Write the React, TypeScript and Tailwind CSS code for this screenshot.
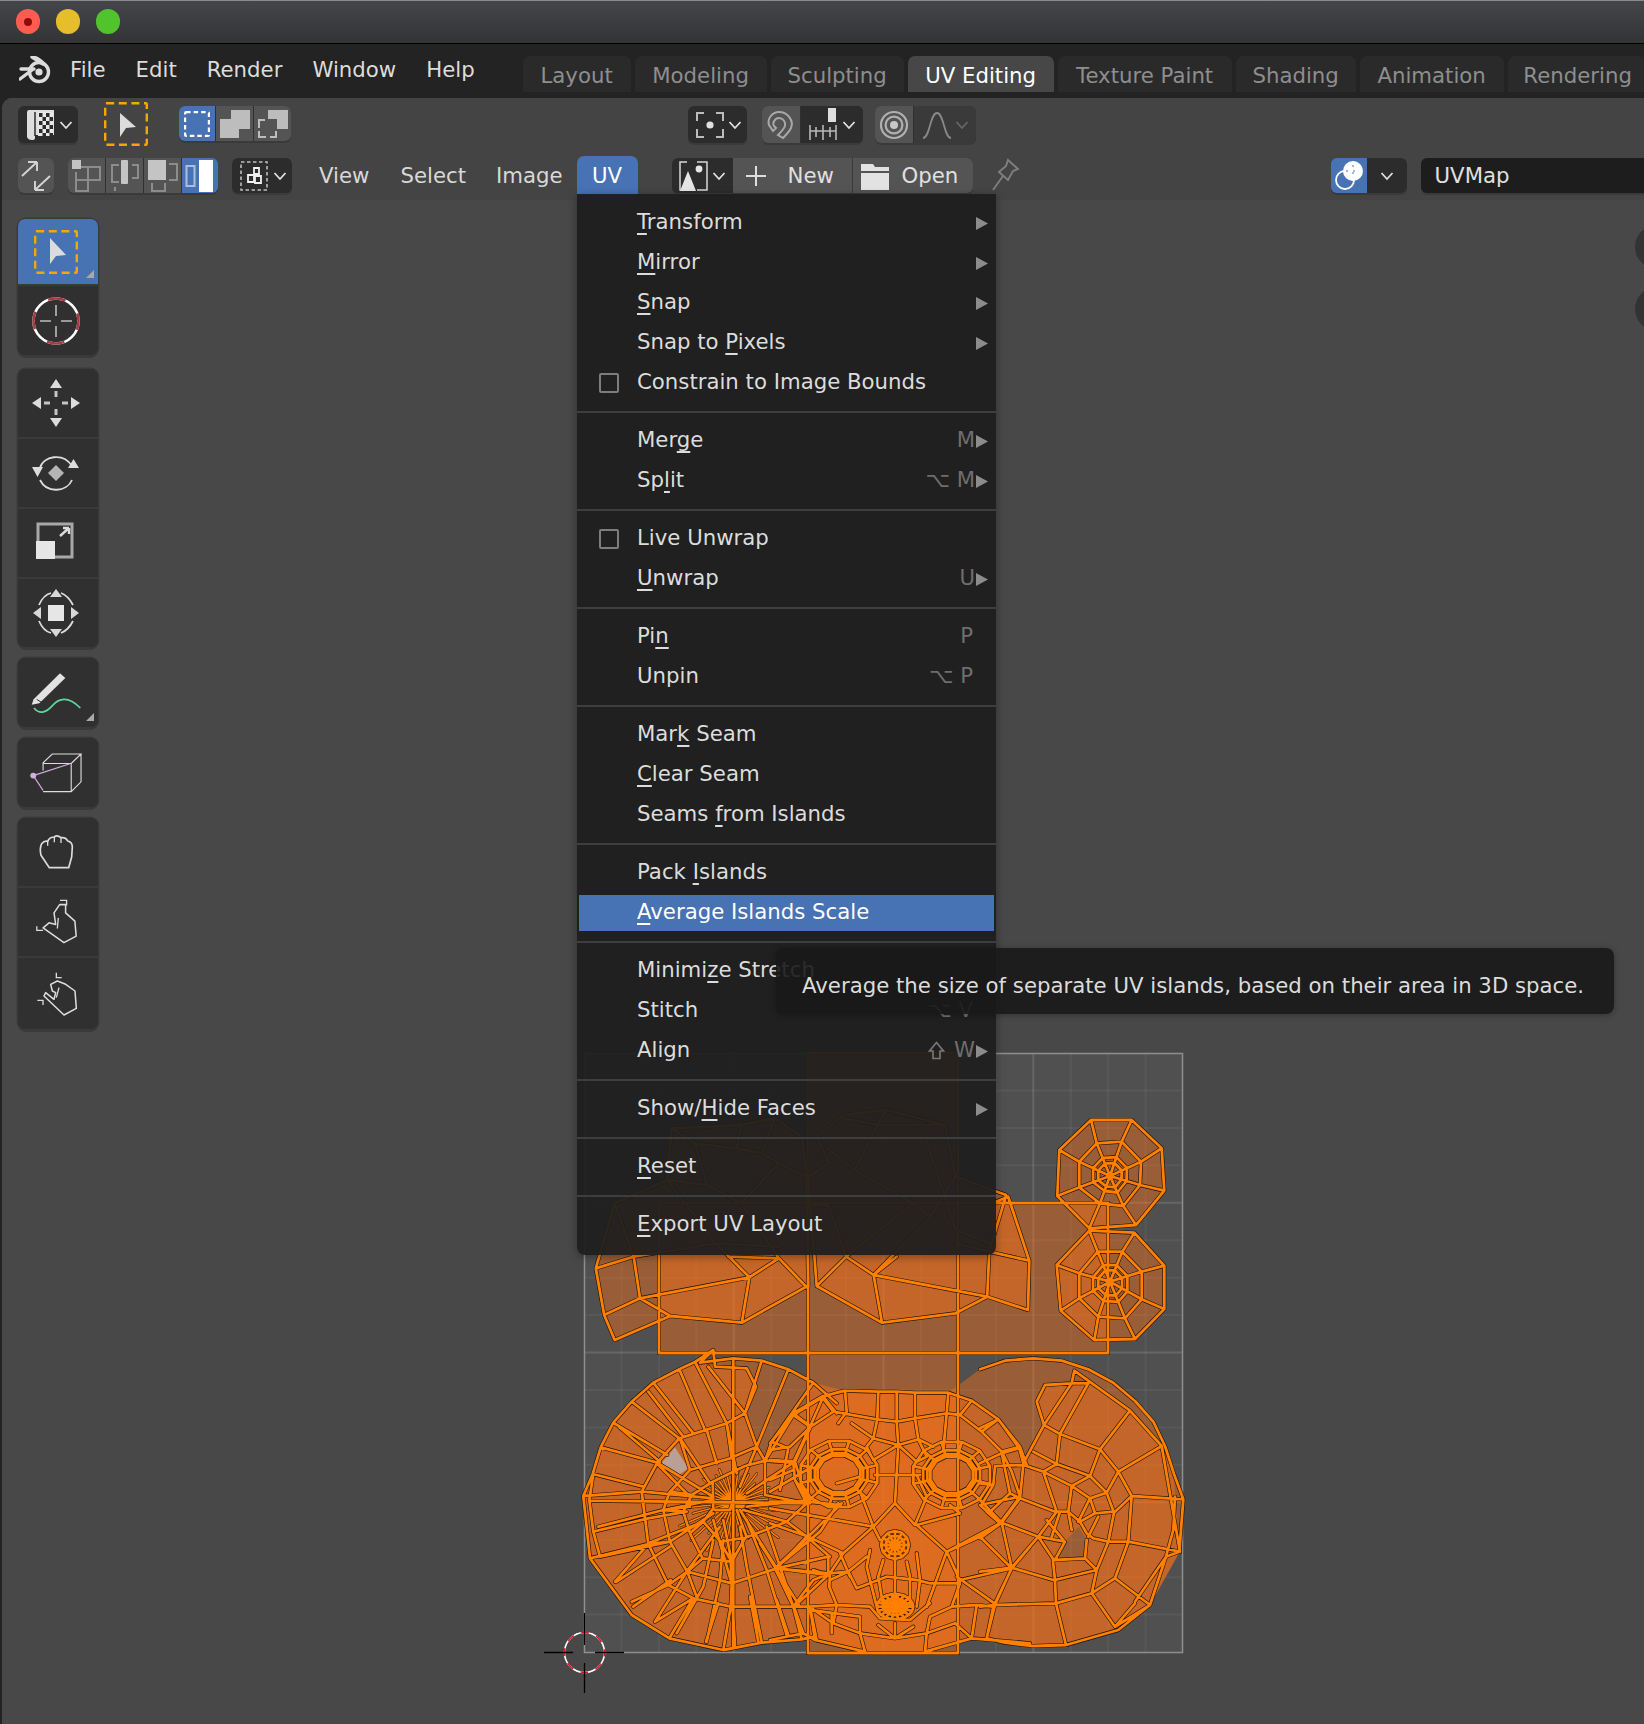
import React from "react";

const F = { fontFamily: '"DejaVu Sans", "Liberation Sans", sans-serif' };

type M = [number, number, number, number];
const z9: M = [580, 1340, 1 / 3, 1 / 3];
const z10: M = [770, 1380, 1 / 3, 1 / 3];
const z11: M = [980, 1340, 1 / 3, 1 / 3];
const z12: M = [1040, 1100, 1 / 3, 1 / 3];
const z7: M = [560, 1030, 1 / 2.376, 1 / 3];

const parse = (s: string, m: M) =>
  s.trim().split(/\s+/).map((p) => {
    const [x, y] = p.split(",").map(Number);
    return [m[0] + x * m[2], m[1] + y * m[3]] as [number, number];
  });
const toD = (pts: [number, number][]) => "M" + pts.map((p) => p[0].toFixed(1) + " " + p[1].toFixed(1)).join("L");
const lines = (arr: string[], m: M) => arr.map((s) => toD(parse(s, m))).join("");

const leftLines = [
  "10,468 38,402 62,322 100,248 155,185 220,128 298,88 345,66 400,30 405,80 500,85 528,140 495,220 530,320 555,362 575,305 640,225 730,170 780,155",
  "345,66 400,30 360,68 460,55 545,62 625,88 700,128 770,190",
  "10,468 30,655 155,825 268,895 430,930 545,908 665,898 700,890",
  "28,480 40,575 60,650", "40,402 28,480", "10,468 185,455", "30,655 205,612",
  "185,455 232,368 298,295 440,250 495,220", "30,655 205,612 265,735 340,775 452,800 640,800 690,800", "185,455 205,612",
  "62,322 232,368", "38,402 190,440", "100,248 262,345", "118,262 240,365", "155,185 298,295", "205,155 310,290", "220,128 340,280", "298,88 375,270", "345,66 440,250", "385,80 495,220",
  "105,725 205,612", "155,785 265,735", "160,800 272,720", "225,845 340,775", "268,895 340,775", "290,880 345,780", "378,905 415,790", "430,930 452,800", "465,915 458,805", "545,905 515,770", "625,885 590,780", "665,898 640,800",
  "40,575 205,535 320,515", "60,650 270,605",
  "250,510 268,458 330,390 450,355 530,320", "250,510 270,605 322,695 455,730 590,685 745,705", "272,605 205,612", "322,695 265,735", "455,730 452,800", "590,685 640,800",
  "310,515 335,465 398,425 495,378 555,362 640,368", "310,515 330,580 368,655 452,665 455,730", "368,655 322,695", "335,465 270,455", "310,515 250,510",
  "370,545 422,605 500,592 620,545 680,490 645,420", "400,505 398,425", "405,510 450,510 460,480", "555,362 555,465 680,490", "420,605 455,665 495,595", "330,580 370,545 400,505",
  "545,62 495,220", "625,88 530,320", "700,128 575,305", "440,250 455,355", "380,270 410,370", "300,295 330,390", "190,455 400,475", "232,368 400,470", "250,510 400,480", "205,610 370,545", "270,605 400,520", "320,695 420,560", "455,665 430,540", "590,685 480,510",
  "322,695 350,770", "455,730 400,540", "640,800 560,560", "680,590 590,685", "680,590 620,545", "750,650 680,590", "590,685 745,650", "640,368 645,420 690,480", "575,305 625,325 600,450", "640,225 690,260 640,368", "690,260 730,170", "730,170 770,220", "690,800 710,900", "640,800 700,720 750,700",
  "510,770 535,905", "460,60 460,920", "28,482 690,490",
  "290,880 370,740 400,600", "380,905 420,720 430,600", "545,905 500,680 480,560", "620,885 560,690 500,540", "660,800 540,610", "225,845 320,695", "110,725 270,620", "55,560 250,510 330,500", "230,370 330,470", "300,295 390,430", "440,250 470,400", "530,320 480,440", "640,368 500,460", "690,480 500,500", "620,545 490,510", "500,592 470,510", "640,225 555,362", "700,690 745,705 745,650",
];
const fan: string[] = [];
for (let i = 0; i < 38; i++) {
  const a = (i / 38) * Math.PI * 2 + 0.05;
  const down = Math.sin(a) > 0.1;
  const r = down ? (i % 2 ? 120 : 170) : 85 + (i % 3) * 14;
  const c = Math.cos(a), s = Math.sin(a);
  fan.push(`${(460 + c * 8).toFixed(0)},${(488 + s * 6).toFixed(0)} ${(460 + c * r * 1.05).toFixed(0)},${(488 + s * r * 0.95).toFixed(0)}`);
}

const centerLines = [
  "0,190 70,100 155,50 225,32 325,35 380,35 435,38 535,38 605,62 685,118 750,200 770,255",
  "122,140 190,95 320,118 380,125 435,115 530,100 570,105 635,155 695,215 725,275 750,350",
  "225,32 230,95 205,130", "325,35 322,118 310,175", "380,35 380,125 385,195 375,370", "435,38 435,115 445,178", "535,38 530,100 520,210", "605,62 570,105", "685,118 635,155", "750,200 695,215", "155,50 190,95", "70,100 122,140", "122,140 75,245 110,360",
  "310,175 385,195 445,178", "310,175 245,130", "445,178 490,200", "290,200 310,240 385,195 440,245 470,230", "310,175 290,200", "445,178 470,230",
  "315,285 370,285 450,285", "375,370 310,440 330,480", "375,370 435,435", "272,340 310,440", "470,350 435,435", "270,290 200,310",
  "0,365 115,365 205,375", "205,370 150,455 15,565", "15,565 180,580 235,575", "115,470 220,520 310,440", "440,435 530,515 630,470", "530,515 470,680", "440,435 570,400 540,375", "650,395 690,430 530,515", "690,430 750,350", "690,430 630,470 725,565 780,500", "570,600 725,565", "725,565 670,680", "560,590 680,675", "0,385 310,440", "0,430 115,470", "115,470 215,370", "115,470 15,565", "15,565 70,680",
  "220,520 180,580 178,620 200,675 118,680 72,680", "180,600 235,575 290,530", "235,575 260,625 350,590 440,600 480,610 560,610", "200,675 300,680", "300,680 330,715 420,720 480,670", "270,710 120,690", "120,680 135,780 285,815", "270,710 270,760 285,815", "325,735 375,775 430,740", "375,775 375,730", "270,760 375,775 470,760 465,815", "480,710 470,760", "480,710 545,680 620,675 670,680", "555,730 605,775 620,675", "555,730 470,760", "465,815 605,775", "118,680 190,730 270,760", "190,730 200,675", "185,700 185,760",
  "300,510 290,560 320,680", "340,540 325,590 340,680", "375,540 375,680", "410,545 420,590 420,680", "440,520 450,600 440,680", "0,780 100,760 135,780", "530,515 560,580 570,610 545,680", "0,680 72,680 100,760", "72,680 180,580", "605,775 780,790", "670,680 650,775", "630,470 530,515", "210,520 240,590", "0,240 75,245", "0,300 70,270", "0,335 110,270", "750,350 630,375 690,430", "440,285 470,350", "0,210 60,200 122,140",
];

const rightLines = [
  "0,88 75,62 160,55 245,62 325,88 400,128 465,183 520,245 555,318 582,402 610,478 598,635 558,650 510,795 415,870 258,915 160,918 75,908 20,895",
  "283,92 275,130 195,135 170,185 192,255", "283,92 450,212 545,318 600,635", "275,130 325,130", "275,130 192,255 130,370", "325,130 240,282 230,370", "192,255 240,282 360,328 330,408", "450,212 360,328 415,395 545,318", "415,395 455,468 610,478", "455,468 445,605 600,635", "455,468 402,518 385,605 445,605", "415,395 380,458 402,518", "330,408 380,458 330,475 275,438 330,408", "160,335 230,372 330,408", "130,375 190,395 275,438", "230,372 190,395 230,515 265,515", "275,438 265,515 275,570", "330,475 345,520 400,515", "345,520 300,545 320,580 340,595 385,605", "330,475 295,545", "265,515 300,545", "385,605 350,690 335,760", "445,605 405,715 510,795", "405,715 335,760 405,860", "350,690 315,655 225,660 218,655 225,720 350,690", "225,720 228,790 335,760", "225,660 255,605 175,590", "230,515 175,590 95,683 0,695", "175,590 218,655", "95,683 220,720", "95,683 45,795", "45,795 228,790 258,915", "45,795 20,895", "0,800 45,795", "130,375 120,475 225,515", "120,475 65,548 175,590", "65,548 95,683", "65,548 0,595", "118,325 130,370", "118,325 55,238 0,200", "55,238 0,265", "118,325 65,340 90,460 120,475", "65,340 0,370", "50,378 130,375", "90,460 30,515", "40,435 0,430", "45,378 40,435 10,485", "0,480 65,548", "30,515 65,548", "405,860 510,795", "405,860 465,790", "585,470 580,570 558,650 465,785", "200,540 250,600", "240,515 215,590", "315,655 320,600", "355,530 325,590",
];

const topLines = [
  "85,715 105,855 130,930 262,858 432,878 585,770 520,685 450,742 190,805 105,855", "85,715 175,680 190,805 262,858", "450,742 432,878", "520,685 585,770", "520,685 400,680", "450,742 370,640 255,450 130,520 85,715", "175,680 130,520", "255,450 265,295 430,285 510,265 575,320 585,440 590,770", "430,290 420,355 320,340 265,295", "510,265 480,370 420,355", "320,340 350,465 255,450", "480,370 520,400 430,520 350,465", "585,440 520,400", "430,520 520,685", "175,680 370,640 520,650",
  "610,768 680,680 745,735 765,878 610,768", "765,878 940,850 1015,800 745,735", "1015,800 1112,840 1115,692 1020,665 1015,800", "745,735 800,680", "1115,692 1065,500 1035,515", "1020,665 940,640", "675,255 775,240 915,285 940,440 1060,495", "610,320 675,255", "610,320 640,400 590,440 610,768", "775,240 755,285 675,265", "915,285 755,285", "755,285 700,420 840,520 680,680", "870,330 940,600 1020,640", "635,355 700,420", "840,520 880,560 940,440", "1060,495 1020,665", "680,680 640,530 590,520", "880,560 745,735",
];

const ringPts = (cx: number, cy: number, rx: number, ry: number, n: number, p = 0) =>
  Array.from({ length: n }, (_, i) => {
    const a = ((i + p) / n) * Math.PI * 2;
    return [cx + Math.cos(a) * rx, cy + Math.sin(a) * ry] as [number, number];
  });
const closed = (p: [number, number][]) => toD([...p, p[0]]);
const mapPts = (p: [number, number][], m: M) => p.map((q) => [m[0] + q[0] * m[2], m[1] + q[1] * m[3]] as [number, number]);

function eye(cx: number, cy: number) {
  const n = 12;
  const scales = [1, 1.14, 1.34, 1.8];
  let d = "";
  const rs = scales.map((s) => mapPts(ringPts(cx, cy, 66 * s, 57 * s, n, 0.5), z10));
  rs.forEach((r) => (d += closed(r)));
  for (let i = 0; i < n; i += 1) d += toD(rs.map((r) => r[i]));
  return d;
}
function cluster(cx: number, cy: number, rx: number, ry: number, rings: number, n: number) {
  let d = "";
  for (let k = 1; k <= rings; k++) d += closed(mapPts(ringPts(cx, cy, (rx * k) / rings, (ry * k) / rings, n), z10));
  const o = mapPts(ringPts(cx, cy, rx, ry, n), z10);
  const c = mapPts([[cx, cy]], z10)[0];
  o.forEach((q) => (d += toD([c, q])));
  return d;
}
function web(outerS: string, ringS: string, cx: number, cy: number) {
  const o = parse(outerS, z12);
  const r = parse(ringS, z12);
  const c = parse(`${cx},${cy}`, z12)[0];
  const lerp = (a: [number, number], t: number) => [c[0] + (a[0] - c[0]) * t, c[1] + (a[1] - c[1]) * t] as [number, number];
  let d = closed(o) + closed(r);
  const r3 = r.map((p) => lerp(p, 0.55));
  const r4 = r.map((p) => lerp(p, 0.38));
  d += closed(r3) + closed(r4);
  o.forEach((p, i) => (d += toD([p, r[i], c])));
  return { d, fill: closed(o) };
}
const w1 = web("153,60 275,60 365,145 373,272 288,375 148,385 52,288 58,150", "170,130 245,125 303,185 300,255 250,318 180,310 118,262 118,185", 210, 228);
const w2 = web("148,392 283,398 373,497 373,627 285,717 163,720 62,632 50,495", "173,455 247,455 305,515 305,598 255,655 175,650 118,595 118,520", 210, 545);

const fillB =
  "583.3,1496 592.7,1474 600.7,1447.3 613.3,1422.7 631.7,1401.7 653.3,1382.7 679.3,1369.3 695,1362 715,1366.7 746.7,1368.3 756,1386.7 745,1413.3 756.7,1446.7 765,1460 771.7,1441.7 793.3,1415 823.3,1396.7 845,1390.7 948.3,1392.7 971.7,1400.7 998.3,1419.3 1020,1446.7 1023.3,1463 1045,1425 1036.7,1401.7 1045,1385 1071.7,1383.3 1088.3,1383.3 1130,1410.7 1161.7,1446 1174,1474 1175,1496.7 1180,1551.7 1150,1605 1118.3,1630 1066,1645 1033.3,1646 986.7,1638.3 971.7,1638 925,1652.7 865,1652.7 803,1639 761.7,1642.7 723.3,1650 669.3,1638.3 631.7,1615 590,1558.3";
const hole = "1052.7,1558.3 1065,1541.7 1078.3,1526.7 1086.7,1540 1085,1558.3";
const fillA =
  "583.3,1496 592.7,1474 600.7,1447.3 613.3,1422.7 631.7,1401.7 653.3,1382.7 679.3,1369.3 695,1362 733.3,1358.3 761.7,1360.7 788.3,1369.3 813.3,1382.7 845,1390.7 948.3,1392.7 980,1369.3 1005,1360.7 1033.3,1358.3 1061.7,1360.7 1088.3,1369.3 1113.3,1382.7 1135,1401 1153.3,1421.7 1165,1446 1174,1474 1183.3,1499.3 1179.3,1551.7 1150,1605 1118.3,1630 1066,1645 1033.3,1646 986.7,1638.3 971.7,1638 925,1652.7 865,1652.7 803,1639 761.7,1642.7 723.3,1650 669.3,1638.3 631.7,1615 590,1558.3";
const polyD = (s: string) => "M" + s.trim().split(/\s+/).map((p) => p.replace(",", " ")).join("L") + "Z";
const topFillL = "85,715 105,855 130,930 262,858 432,878 585,770 590,440 575,320 510,265 430,285 265,295 255,450 130,520";
const topFillR = "610,768 765,878 940,850 1015,800 1112,840 1115,692 1065,500 940,440 915,285 775,240 675,255 610,320 640,400 590,440";

const FACE = "rgba(255,115,22,.42)";

function Mesh() {
  const allLines =
    lines(topLines, z7) +
    lines(leftLines, z9) +
    lines(centerLines, z10) +
    lines(rightLines, z11) +
    eye(207, 282) +
    eye(545, 285) +
    cluster(375, 495, 42, 42, 3, 12) +
    cluster(375, 680, 55, 38, 3, 18) +
    w1.d +
    w2.d +
    "M659 1203H1108V1353H659ZM808 1053H958V1653H808Z";
  const fanD = lines(fan, z9);
  const grid: React.ReactNode[] = [];
  for (let i = 1; i < 16; i++) {
    const p = i * 37.44;
    const o = i % 4 === 0 ? 0.13 : 0.05;
    grid.push(<line key={"v" + i} x1={584 + p} y1={1053} x2={584 + p} y2={1652} stroke="#fff" strokeOpacity={o} strokeWidth={2} />);
    grid.push(<line key={"h" + i} x1={584} y1={1053 + p} x2={1183} y2={1053 + p} stroke="#fff" strokeOpacity={o} strokeWidth={2} />);
  }
  return (
    <svg className="absolute left-0 top-0" width={1644} height={1724} viewBox="0 0 1644 1724" fill="none">
      <rect x={584} y={1053} width={599} height={599} fill="#505050" />
      {grid}
      <rect x={584.5} y={1053.5} width={598} height={599} stroke="#8e8e8e" strokeWidth={1.5} />
      <path d="M659 1203H808V1053H958V1203H1108V1353H958V1653H808V1353H659Z" fill={FACE} />
      <path d={closed(parse(topFillL, z7))} fill={FACE} />
      <path d={closed(parse(topFillR, z7))} fill={FACE} />
      <path d={w1.fill} fill={FACE} />
      <path d={w2.fill} fill={FACE} />
      <path d={polyD(fillA)} fill={FACE} />
      <path d={polyD(fillB) + polyD(hole)} fillRule="evenodd" fill={FACE} />
      <path d={closed(parse("245,368 285,322 325,385 290,410", z9))} fill="#bb9f94" />
      <path d={fanD} stroke="#1a1008" strokeWidth={2.6} strokeLinecap="round" />
      <path d={fanD} stroke="#ff8000" strokeWidth={1.7} strokeLinecap="round" />
      <path d={allLines} stroke="#1a1008" strokeWidth={4} strokeLinejoin="round" strokeLinecap="round" />
      <path d={allLines} stroke="#ff8000" strokeWidth={2.8} strokeLinejoin="round" strokeLinecap="round" />
      <g>
        <circle cx={584.5} cy={1652.5} r={20} stroke="#fff" strokeWidth={1.6} />
        <circle cx={584.5} cy={1652.5} r={20} stroke="#d8182a" strokeWidth={1.6} strokeDasharray="7.85 7.85" strokeDashoffset={3.9} />
        <path d="M544 1652.5H573M595 1652.5H624M584.5 1613V1645M584.5 1663V1693" stroke="#000" strokeWidth={1.3} />
      </g>
    </svg>
  );
}

const Chevron = ({ c = "#e0e0e0" }: { c?: string }) => (
  <svg width={14} height={10} viewBox="0 0 14 10" fill="none" className="shrink-0">
    <path d="M1.5 2 7 8l5.5-6" stroke={c} strokeWidth={1.8} />
  </svg>
);

const Checker = () => {
  const cells: React.ReactNode[] = [];
  for (let r = 0; r < 6; r++)
    for (let c = 0; c < 4; c++)
      if ((r + c) % 2 === 0) cells.push(<rect key={r + "-" + c} x={13 + c * 3.5} y={3 + r * 4} width={3.5} height={4} fill="#2b2b2b" />);
  return (
    <svg width={28} height={30} viewBox="0 0 28 30" fill="none" className="shrink-0">
      <path d="M3 0H28V25H9V28Q9 30 6 30Q2 30 1 27V3Q1 0 3 0Z" fill="#dedede" />
      <rect x={12} y={2} width={15} height={24} fill="#e8e8e8" />
      {cells}
      <path d="M9 2V26" stroke="#2b2b2b" strokeWidth={1.5} />
    </svg>
  );
};

const DashRect = ({ s = 44, c = "#f6a800", w = 2.6, dash = "7.5 4.5" }: { s?: number; c?: string; w?: number; dash?: string }) => (
  <rect x={w / 2} y={w / 2} width={s - w} height={s - w} stroke={c} strokeWidth={w} strokeDasharray={dash} fill="none" rx={1} />
);

const Seg = ({ w, bg, children, cls = "" }: { w: number; bg: string; children?: React.ReactNode; cls?: string }) => (
  <div style={{ width: w, background: bg }} className={"flex h-full shrink-0 items-center justify-center " + cls}>
    {children}
  </div>
);

const Group = ({ children, h = 36, cls = "" }: { children: React.ReactNode; h?: number; cls?: string }) => (
  <div style={{ height: h }} className={"flex overflow-hidden rounded-[6px] shadow-[0_2px_0_#3a3a3a] gap-[1px] bg-[#303030] " + cls}>
    {children}
  </div>
);

const IconModeBox = () => (
  <svg width={26} height={26} viewBox="0 0 26 26">
    <DashRect s={26} c="#fff" w={2.2} dash="4.5 3" />
  </svg>
);
const IconModeExtend = () => (
  <svg width={30} height={28} viewBox="0 0 30 28">
    <path d="M11 0H30V19H19V28H0V9H11Z" fill="#bdbdbd" />
  </svg>
);
const IconModeSub = () => (
  <svg width={30} height={28} viewBox="0 0 30 28" fill="none">
    <path d="M10 0H30V19H19V9H10Z" fill="#bdbdbd" />
    <path d="M1 18V10H7M1 21V27H8M12 27H18V21" stroke="#bdbdbd" strokeWidth={2} />
  </svg>
);

const Row1 = () => (
  <div className="flex h-[48px] items-start pl-[16px] pt-[8px] [&>*]:shrink-0">
    <Group h={37} cls="!bg-[#2c2c2c]">
      <div className="flex w-[60px] items-center gap-[5px] pl-[8px]">
        <Checker />
        <Chevron />
      </div>
    </Group>
    <div className="ml-[26px] -mt-[4px]">
      <svg width={44} height={44} viewBox="0 0 44 44" fill="none">
        <DashRect s={44} w={2.4} dash="8 4.6" />
        <path d="M16 11 32 25 22 26 16 35Z" fill="#dcdcdc" />
      </svg>
    </div>
    <div className="ml-[31px]">
      <Group h={35}>
        <Seg w={36} bg="#4772b3"><IconModeBox /></Seg>
        <Seg w={37} bg="#545454"><IconModeExtend /></Seg>
        <Seg w={37} bg="#545454"><IconModeSub /></Seg>
      </Group>
    </div>
    <div className="ml-[397px]">
      <Group h={37} cls="!bg-[#2c2c2c]">
        <div className="flex w-[59px] items-center gap-[3px] pl-[7px]">
          <svg width={30} height={30} viewBox="0 0 30 30" fill="none" className="shrink-0">
            <path d="M9 3H2V11M21 3H28V11M9 27H2V19M21 27H28V19" stroke="#bcbcbc" strokeWidth={2} />
            <circle cx={15} cy={15} r={3.6} fill="#e0e0e0" />
          </svg>
          <Chevron />
        </div>
      </Group>
    </div>
    <div className="ml-[15px]">
      <Group h={37}>
        <Seg w={38} bg="#545454">
          <svg width={30} height={30} viewBox="0 0 30 30" fill="none">
            <path d="M7 21 3 15C1 9 6 2 13 2c9 0 15 9 12 16-2 4-5 7-8 10l-5-3c3-3 6-6 7-9 1-4-2-8-6-8s-7 5-5 8l2 2Z" stroke="#a8a8a8" strokeWidth={2} />
          </svg>
        </Seg>
        <Seg w={62} bg="#2c2c2c">
          <svg width={28} height={34} viewBox="0 0 28 34" fill="none">
            <rect x={19} y={0} width={8} height={14} fill="#dedede" />
            <path d="M1 23H27M1 17V32M7 19V29M14 17V32M21 19V29M27 17V32" stroke="#b8b8b8" strokeWidth={1.6} />
          </svg>
          <span className="ml-[5px]"><Chevron /></span>
        </Seg>
      </Group>
    </div>
    <div className="ml-[12px]">
      <Group h={37}>
        <Seg w={38} bg="#545454">
          <svg width={30} height={30} viewBox="0 0 30 30" fill="none">
            <circle cx={15} cy={15} r={13} stroke="#b0b0b0" strokeWidth={2.2} />
            <circle cx={15} cy={15} r={8.4} stroke="#b0b0b0" strokeWidth={2.2} />
            <circle cx={15} cy={15} r={4} fill="#c8c8c8" />
          </svg>
        </Seg>
        <Seg w={62} bg="#3a3a3a">
          <svg width={30} height={30} viewBox="0 0 30 30" fill="none">
            <path d="M1 28C8 28 8 3 15 3S22 28 29 28" stroke="#888" strokeWidth={1.8} />
          </svg>
          <span className="ml-[3px]"><Chevron c="#666" /></span>
        </Seg>
      </Group>
    </div>
  </div>
);

const SelVert = () => (
  <svg width={30} height={32} viewBox="0 0 30 32" fill="none">
    <path d="M8 7H28V20H16V31H4V12" stroke="#8c8c8c" strokeWidth={2} />
    <path d="M16 7V20H4" stroke="#8c8c8c" strokeWidth={2} />
    <rect x={0} y={0} width={9} height={9} fill="#c4c4c4" />
  </svg>
);
const SelEdge = () => (
  <svg width={30} height={32} viewBox="0 0 30 32" fill="none">
    <path d="M9 5H2V22H9M22 5H28V18H22M5 31V27" stroke="#8c8c8c" strokeWidth={2} />
    <rect x={11} y={0} width={7} height={24} fill="#c4c4c4" rx={1} />
  </svg>
);
const SelFace = () => (
  <svg width={30} height={32} viewBox="0 0 30 32" fill="none">
    <rect x={0} y={0} width={18} height={20} fill="#c4c4c4" />
    <path d="M21 4H29V20H21M4 23V31H17V23" stroke="#8c8c8c" strokeWidth={2} />
  </svg>
);
const SelIsland = () => (
  <svg width={30} height={32} viewBox="0 0 30 32" fill="none">
    <rect x={1.5} y={6} width={8} height={20} stroke="#a9bfdf" strokeWidth={2} />
    <rect x={14} y={0} width={14} height={32} fill="#fff" />
  </svg>
);

const Row2 = () => (
  <div className="flex h-[54px] items-start pl-[16px] pt-[12px] [&>*]:shrink-0">
    <Group h={35}>
      <Seg w={36} bg="#545454">
        <svg width={30} height={32} viewBox="0 0 30 32" fill="none">
          <path d="M1 16 16 2M16 2H7M16 2V11M29 16 14 30M14 30H23M14 30V21" stroke="#d4d4d4" strokeWidth={1.9} />
        </svg>
      </Seg>
    </Group>
    <div className="ml-[14px]">
      <Group h={35}>
        <Seg w={37} bg="#545454"><SelVert /></Seg>
        <Seg w={37} bg="#545454"><SelEdge /></Seg>
        <Seg w={37} bg="#545454"><SelFace /></Seg>
        <Seg w={36} bg="#4772b3"><SelIsland /></Seg>
      </Group>
    </div>
    <div className="ml-[14px]">
      <Group h={35} cls="!bg-[#2c2c2c]">
        <div className="flex w-[60px] items-center gap-[5px] pl-[8px]">
          <svg width={28} height={30} viewBox="0 0 28 30" fill="none" className="shrink-0">
            <rect x={1} y={1} width={26} height={28} stroke="#bdbdbd" strokeWidth={1.6} strokeDasharray="3.5 2.5" />
            <path d="M14 7h5v6h-5zM8 14h6v7H8zM15 15h6v7h-6z" stroke="#f0f0f0" strokeWidth={1.8} />
          </svg>
          <Chevron />
        </div>
      </Group>
    </div>
    <span className="ml-[27px] text-[21.25px] leading-[35px] text-[#d8d8d8]">View</span>
    <span className="ml-[31px] text-[21.25px] leading-[35px] text-[#d8d8d8]">Select</span>
    <span className="ml-[30px] text-[21.25px] leading-[35px] text-[#d8d8d8]">Image</span>
    <div className="ml-[14px] -mt-[2px] flex h-[39px] w-[61px] items-center justify-center rounded-t-[7px] bg-[#4772b3] text-[21.25px] text-white">UV</div>
    <div className="ml-[34px] flex h-[35px] overflow-hidden rounded-[6px] bg-[#2c2c2c] shadow-[0_2px_0_#3a3a3a]">
      <div className="flex w-[61px] items-center gap-[3px] pl-[7px]">
        <svg width={30} height={30} viewBox="0 0 30 30" fill="none" className="shrink-0">
          <path d="M8 1H1V29H8M18 1H28V29H18" stroke="#d8d8d8" strokeWidth={1.5} />
          <circle cx={20} cy={8} r={3.4} fill="#e6e6e6" />
          <path d="M9 10 17 30H1Z" fill="#e6e6e6" />
        </svg>
        <Chevron />
      </div>
      <div className="flex w-[120px] items-center border-r border-[#3a3a3a] bg-[#545454] pl-[12px] text-[21.25px] text-[#e0e0e0]">
        <svg width={22} height={22} viewBox="0 0 22 22" fill="none">
          <path d="M11 1V21M1 11H21" stroke="#dedede" strokeWidth={2} />
        </svg>
        <span className="ml-[21px]">New</span>
      </div>
      <div className="flex w-[120px] items-center bg-[#545454] pl-[8px] text-[21.25px] text-[#e0e0e0]">
        <svg width={28} height={28} viewBox="0 0 28 28" fill="none">
          <path d="M0 2H12L14 5H28V9H0Z" fill="#e2e2e2" />
          <rect x={0} y={11} width={28} height={17} fill="#e2e2e2" />
        </svg>
        <span className="ml-[13px]">Open</span>
      </div>
    </div>
    <div className="ml-[18px]">
      <svg width={30} height={34} viewBox="0 0 30 34" fill="none">
        <path d="M17 2 27 11 22 13 17 22 8 14 15 8ZM12 18 2 32" stroke="#7f7f7f" strokeWidth={1.9} />
      </svg>
    </div>
    <div className="ml-[310px] flex h-[35px] overflow-hidden rounded-[6px] shadow-[0_2px_0_#3a3a3a]">
      <div className="flex w-[36px] items-center justify-center bg-[#4772b3]">
        <svg width={30} height={32} viewBox="0 0 30 32" fill="none">
          <circle cx={11} cy={20} r={9} stroke="#fff" strokeWidth={1.8} />
          <circle cx={19} cy={11} r={10} fill="#fff" />
          <path d="M19 5V18M12 11H26" stroke="#4772b3" strokeWidth={1} strokeDasharray="2 5" />
        </svg>
      </div>
      <div className="flex w-[40px] items-center justify-center bg-[#2c2c2c]"><Chevron /></div>
    </div>
    <div className="ml-[14px] flex h-[35px] w-[240px] items-center rounded-[6px] bg-[#1d1d1d] pl-[14px] text-[21.25px] text-[#e0e0e0] shadow-[0_2px_0_#3a3a3a]">UVMap</div>
  </div>
);

const ToolBtn = ({ active, corner, children, h = 70, last, first }: { active?: boolean; corner?: boolean; children: React.ReactNode; h?: number; last?: boolean; first?: boolean }) => (
  <div
    style={{ height: h }}
    className={
      "relative flex items-center justify-center pr-[4px] " +
      (active ? "bg-[#4772b3] " : "bg-[#303030] ") +
      (last ? "" : "border-b-2 border-[#3a3a3a] ") +
      (first ? "rounded-t-[7px] " : "") +
      (last ? "rounded-b-[7px]" : "")
    }
  >
    {children}
    {corner && (
      <svg className="absolute bottom-[6px] right-[4px]" width={8} height={8} viewBox="0 0 8 8">
        <path d="M8 0V8H0Z" fill="#a8a8a8" />
      </svg>
    )}
  </div>
);
const ToolGroup = ({ children, cls = "" }: { children: React.ReactNode; cls?: string }) => (
  <div className={"w-[80px] rounded-[8px] bg-[#303030] shadow-[0_0_0_1.5px_#3a3a3a,0_2px_0_1px_#3a3a3a] " + cls}>{children}</div>
);

const I = ({ w = 50, h = 50, children, vb }: { w?: number; h?: number; vb: string; children: React.ReactNode }) => (
  <svg width={w} height={h} viewBox={vb} fill="none">
    {children}
  </svg>
);

const Toolbar = () => (
  <div className="flex flex-col pl-[16px] pt-[19px]">
    <ToolGroup>
      <ToolBtn active corner first h={67}>
        <svg width={44} height={44} viewBox="0 0 44 44" fill="none">
          <DashRect s={44} w={2.4} dash="8 4.6" />
          <path d="M16 8 32 25 22 26 16 34Z" fill="#dcdcdc" />
        </svg>
      </ToolBtn>
      <ToolBtn last h={69}>
        <svg width={50} height={50} viewBox="0 0 50 50" fill="none">
          <circle cx={25} cy={25} r={22.5} stroke="#fff" strokeWidth={2.6} />
          <circle cx={25} cy={25} r={22.5} stroke="#a53a44" strokeWidth={2.6} strokeDasharray="17.7 17.7" strokeDashoffset={8.8} />
          <path d="M25 9V20M25 30V41M9 25H20M30 25H41" stroke="#bcbcbc" strokeWidth={1.6} />
        </svg>
      </ToolBtn>
    </ToolGroup>
    <ToolGroup cls="mt-[14px]">
      <ToolBtn first>
        <I vb="0 0 50 50" >
          <path d="M25 1 31 10H19ZM25 49 31 40H19ZM1 25 10 19V31ZM49 25 40 19V31Z" fill="#dcdcdc" />
          <path d="M25 13V19M25 31V37M13 25H19M31 25H37" stroke="#c4c4c4" strokeWidth={3} />
        </I>
      </ToolBtn>
      <ToolBtn>
        <I vb="0 0 50 50">
          <path d="M9 20C12 8 32 4 41 18M41 32C36 44 16 46 9 32" stroke="#dcdcdc" strokeWidth={1.8} />
          <path d="M1 19H12L6.5 29ZM37 20H48L42.5 11Z" fill="#dcdcdc" />
          <path d="M25 17 33 25 25 33 17 25Z" fill="#b4b4b4" />
        </I>
      </ToolBtn>
      <ToolBtn>
        <svg width={50} height={50} viewBox="0 0 50 50" fill="none" className="mt-[3px]">
          <path d="M7 22V4H41V37H24" stroke="#a8a8a8" strokeWidth={3} />
          <rect x={5} y={21} width={19} height={18} fill="#e6e6e6" />
          <path d="M29 16 38 8M38 8H32M38 8V14" stroke="#dcdcdc" strokeWidth={2.4} />
        </svg>
      </ToolBtn>
      <ToolBtn last h={68}>
        <I vb="0 0 50 50">
          <path d="M8 17C11 10 16 6 20 5M30 5C35 7 39 11 42 17M8 33C11 40 16 44 20 45M30 45C35 43 39 39 42 33" stroke="#dcdcdc" strokeWidth={1.8} />
          <path d="M25 1 31 9H19ZM25 49 31 41H19ZM2 25 10 19V31ZM48 25 40 19V31Z" fill="#d8d8d8" />
          <rect x={17} y={17} width={16} height={16} fill="#e6e6e6" />
        </I>
      </ToolBtn>
    </ToolGroup>
    <ToolGroup cls="mt-[11px]">
      <ToolBtn last first corner h={69}>
        <svg width={50} height={42} viewBox="95 90 150 126" fill="none">
          <path d="M97 188 103 172 182 94 198 108 120 184Z" fill="#e2e2e2" />
          <path d="M112 172 128 182" stroke="#303030" strokeWidth={3} />
          <path d="M104 198C122 220 142 210 160 190S205 160 243 198" stroke="#5fd6a0" strokeWidth={5} />
        </svg>
      </ToolBtn>
    </ToolGroup>
    <ToolGroup cls="mt-[11px]">
      <ToolBtn last first h={69}>
        <svg width={54} height={42} viewBox="75 330 165 126" fill="none">
          <path d="M118 385V362L146 335H234L204 364H118M234 335V420L204 450H118M204 364V450" stroke="#dcdcdc" strokeWidth={3.4} />
          <path d="M88 401 200 365M88 401 118 446" stroke="#d4aee0" strokeWidth={3.4} />
          <circle cx={88} cy={401} r={9} fill="#d4aee0" />
        </svg>
      </ToolBtn>
    </ToolGroup>
    <ToolGroup cls="mt-[11px]">
      <ToolBtn first>
        <svg width={40} height={40} viewBox="105 575 120 120" fill="none">
          <path d="M145 682 120 645Q115 625 122 610Q130 600 140 603Q145 590 160 590Q168 583 180 592Q195 590 200 602Q214 605 214 620L212 650 203 682Z" stroke="#dcdcdc" strokeWidth={5} strokeLinejoin="round" />
          <path d="M160 590V606M180 592V608M140 603V616" stroke="#dcdcdc" strokeWidth={4} />
        </svg>
      </ToolBtn>
      <ToolBtn>
        <svg width={45} height={48} viewBox="95 770 135 145" fill="none">
          <path d="M122 860 185 905 222 885 218 840 190 815 190 790 172 790 155 815 160 850 140 845Z" stroke="#dcdcdc" strokeWidth={4.6} strokeLinejoin="round" />
          <path d="M168 830 165 862M103 855V868H122M173 777H193V793" stroke="#dcdcdc" strokeWidth={4} />
        </svg>
      </ToolBtn>
      <ToolBtn last h={71}>
        <svg width={45} height={46} viewBox="95 980 135 138" fill="none">
          <path d="M125 1055 185 1112 222 1092 218 1040 190 1020 165 1010 145 1020 150 1040 160 1045 155 1065 130 1045Z" stroke="#dcdcdc" strokeWidth={4.6} strokeLinejoin="round" />
          <path d="M170 1030 162 1060M105 1068H122V1082M162 985V1000H178" stroke="#dcdcdc" strokeWidth={4} />
        </svg>
      </ToolBtn>
    </ToolGroup>
  </div>
);

type Item = { l: React.ReactNode; s?: React.ReactNode; arrow?: boolean; check?: boolean; active?: boolean } | "sep";
const U = ({ c }: { c: string }) => (
  <span className="underline decoration-2 underline-offset-[4px] [text-decoration-skip-ink:none]">{c}</span>
);
const ShiftIcon = () => (
  <svg className="mr-[9px] inline-block align-[-3px]" width={17} height={19} viewBox="0 0 17 19" fill="none">
    <path d="M8.5 1.5 15.5 10H12V17.5H5V10H1.5Z" stroke="#7a7a7a" strokeWidth={1.6} />
  </svg>
);
const items: Item[] = [
  { l: <><U c="T" />ransform</>, arrow: true },
  { l: <><U c="M" />irror</>, arrow: true },
  { l: <><U c="S" />nap</>, arrow: true },
  { l: <>Snap to <U c="P" />ixels</>, arrow: true },
  { l: "Constrain to Image Bounds", check: true },
  "sep",
  { l: <>Mer<U c="g" />e</>, s: "M", arrow: true },
  { l: <>Sp<U c="l" />it</>, s: "⌥ M", arrow: true },
  "sep",
  { l: "Live Unwrap", check: true },
  { l: <><U c="U" />nwrap</>, s: "U", arrow: true },
  "sep",
  { l: <>Pi<U c="n" /></>, s: "P" },
  { l: "Unpin", s: "⌥ P" },
  "sep",
  { l: <>Mar<U c="k" /> Seam</> },
  { l: <><U c="C" />lear Seam</> },
  { l: <>Seams <U c="f" />rom Islands</> },
  "sep",
  { l: <>Pack <U c="I" />slands</> },
  { l: <><U c="A" />verage Islands Scale</>, active: true },
  "sep",
  { l: <>Minimi<U c="z" />e Stretch</> },
  { l: "Stitch", s: "⌥ V" },
  { l: "Align", s: <><ShiftIcon />W</>, arrow: true },
  "sep",
  { l: <>Show/<U c="H" />ide Faces</>, arrow: true },
  "sep",
  { l: <><U c="R" />eset</> },
  "sep",
  { l: <><U c="E" />xport UV Layout</> },
];

const Menu = () => (
  <div className="absolute left-[577px] top-[194px] h-[1061px] w-[419px] rounded-b-[8px] bg-[#1f1f1f]/95 pb-[10px] pt-[9px] shadow-[0_2px_8px_rgba(0,0,0,.35)]">
    {items.map((it, i) =>
      it === "sep" ? (
        <div key={i} className="flex h-[18px] items-center">
          <div className="h-[2px] w-full bg-[#3e3e3e]" />
        </div>
      ) : (
        <div key={i} className="flex h-[40px] items-center">
          <div className={"relative flex h-[36px] w-full items-center pl-[60px] pr-[7px] text-[21.25px] " + (it.active ? "mx-[2px] bg-[#4772b3] text-white" : "text-[#dcdcdc]")}>
            {it.check && <div className="absolute left-[22px] top-[8px] h-[20px] w-[20px] rounded-[2px] border-2 border-[#7d7d7d]" />}
            <span className={"-mt-[2px] " + (it.active ? "-ml-[2px]" : "")}>{it.l}</span>
            <div className="ml-auto flex items-center">
              {it.s && <span className="-mt-[2px] text-[#6e6e6e]">{it.s}</span>}
              {it.arrow ? (
                <svg className="ml-[1px]" width={13} height={15} viewBox="0 0 13 15"><path d="M0 1 12 7.5 0 14Z" fill="#8c8c8c" /></svg>
              ) : (
                <span className="w-[16px]" />
              )}
            </div>
          </div>
        </div>
      )
    )}
  </div>
);

const Tooltip = () => (
  <div className="absolute left-[776px] top-[948px] flex h-[66px] w-[838px] items-center rounded-[8px] bg-[#181818]/90 pl-[26px] pt-[9px] text-[21.25px] text-[#dcdcdc] shadow-[0_1px_6px_rgba(0,0,0,.3)]">
    Average the size of separate UV islands, based on their area in 3D space.
  </div>
);

const tabs: [string, number][] = [
  ["Layout", 108], ["Modeling", 132], ["Sculpting", 133], ["UV Editing", 146], ["Texture Paint", 174], ["Shading", 120], ["Animation", 144], ["Rendering", 140],
];

const Logo = () => (
  <svg width={32} height={28} viewBox="0 0 32 28" fill="none">
    <circle cx={20} cy={16} r={9.5} stroke="#dcdcdc" strokeWidth={3.4} />
    <circle cx={20} cy={16} r={3.6} fill="#dcdcdc" />
    <path d="M13 1 24 8M2 13H15M1 23 13 14M13 1C17 1 23 5 25 8" stroke="#dcdcdc" strokeWidth={3.4} strokeLinecap="round" />
  </svg>
);

export default function App() {
  return (
    <div style={F} className="relative h-[1724px] w-[1644px] overflow-hidden bg-[#232323] text-[21.25px]">
      <div className="flex h-[44px] items-center gap-[16px] border-b border-black bg-gradient-to-b from-[#44464a] to-[#333436] pl-[16px] shadow-[inset_0_1px_0_#8a8a8a]">
        <div className="flex h-[25px] w-[24px] items-center justify-center rounded-full bg-[#ff5b50]">
          <div className="h-[8px] w-[8px] rounded-full bg-[#8f0d08]" />
        </div>
        <div className="h-[25px] w-[24px] rounded-full bg-[#e6bd2b]" />
        <div className="h-[25px] w-[24px] rounded-full bg-[#50c32d]" />
      </div>
      <div className="flex h-[54px] items-start bg-[#232323] [&>*]:shrink-0">
        <div className="ml-[19px] mt-[12px]"><Logo /></div>
        <div className="ml-[19px] mt-[11px] flex gap-[30px] leading-[30px] text-[#dcdcdc]">
          <span>File</span><span>Edit</span><span>Render</span><span>Window</span><span>Help</span>
        </div>
        <div className="ml-[48px] mt-[12px] flex gap-[4px]">
          {tabs.map(([t, w]) => (
            <div
              key={t}
              style={{ width: w }}
              className={"flex h-[36px] shrink-0 items-center justify-center rounded-t-[7px] pt-[3px] " + (t === "UV Editing" ? "bg-[#474747] text-white" : "bg-[#2a2a2a] text-[#8e8e8e]")}
            >
              {t}
            </div>
          ))}
        </div>
      </div>
      <div className="ml-[2px] h-[1626px] rounded-tl-[10px] bg-[#484848]">
        <div className="h-[102px] rounded-tl-[10px] bg-[#444444]">
          <Row1 />
          <Row2 />
        </div>
        <Toolbar />
      </div>
      <Mesh />
      <div className="absolute left-[1635px] top-[225px] h-[44px] w-[44px] rounded-full bg-[#333333]" />
      <div className="absolute left-[1635px] top-[287px] h-[44px] w-[44px] rounded-full bg-[#333333]" />
      <Menu />
      <Tooltip />
    </div>
  );
}
